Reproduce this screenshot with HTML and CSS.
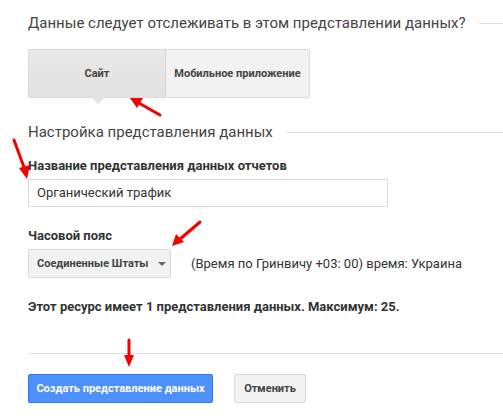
FILE: index.html
```html
<!DOCTYPE html>
<html lang="ru">
<head>
<meta charset="utf-8">
<link rel="stylesheet" href="styles.css">
</head>
<body>
<div class="page">
  <div class="legend legend-top"><span>Данные следует отслеживать в этом представлении данных?</span></div>
  <div class="toggle">
    <div class="tg tg-on">Сайт</div>
    <div class="tg">Мобильное приложение</div>
  </div>
  <div class="legend legend-setup"><span>Настройка представления данных</span></div>
  <div class="label label-name">Название представления данных отчетов</div>
  <div class="input">Органический трафик</div>
  <div class="label label-tz">Часовой пояс</div>
  <div class="tz-row">
    <div class="select">Соединенные Штаты <span class="caret"></span></div>
    <div class="tz-text">(Время по Гринвичу +03: 00) время: Украина</div>
  </div>
  <div class="note">Этот ресурс имеет 1 представления данных. Максимум: 25.</div>
  <div class="sep"></div>
  <div class="actions">
    <div class="btn btn-primary">Создать представление данных</div>
    <div class="btn">Отменить</div>
  </div>
</div>
<svg class="arrows" width="503" height="418" viewBox="0 0 503 418">
  <g stroke="#f40000" stroke-width="3" stroke-linecap="round" fill="none">
    <line x1="160" y1="115" x2="137" y2="102"/>
    <line x1="14" y1="140" x2="25" y2="170"/>
    <line x1="200" y1="222" x2="179" y2="240"/>
    <line x1="129" y1="340" x2="129" y2="358"/>
  </g>
  <g fill="#f40000">
    <polygon points="130,98 143,98 137,108"/>
    <polygon points="27,179 19,168 30,165"/>
    <polygon points="172,246 176,234 184,242"/>
    <polygon points="129,367 124,355 134,355"/>
  </g>
</svg>
</body>
</html>
```
FILE: styles.css
```css
html, body {
  margin: 0;
  padding: 0;
  background: #fff;
}
body {
  font-family: Roboto, "Liberation Sans", Arial, sans-serif;
  color: #333;
  width: 503px;
  height: 418px;
  overflow: hidden;
  position: relative;
}
.page {
  padding-left: 28px;
}
.legend {
  display: flex;
  align-items: center;
  font-size: 15px;
  color: #444;
  line-height: 20px;
  white-space: nowrap;
}
.legend::after {
  content: "";
  flex: 1;
  border-top: 1px solid #e0e0e0;
  margin-left: 13px;
}
.legend-top {
  padding-top: 13px;
}
.toggle {
  display: flex;
  width: 282px;
  height: 49px;
  margin-top: 16px;
  border: 1px solid #dadada;
  border-radius: 2px;
  box-sizing: border-box;
  position: relative;
}
.tg {
  display: flex;
  align-items: center;
  justify-content: center;
  font-size: 11px;
  font-weight: bold;
  color: #444;
  background: #f2f2f2;
  flex: 1;
}
.tg-on {
  flex: 0 0 137px;
  background: linear-gradient(#e9e9e9, #e2e2e2);
  border-right: 1px solid #d4d4d4;
  box-sizing: border-box;
  position: relative;
}
.tg-on::after {
  content: "";
  position: absolute;
  left: 62px;
  bottom: -7px;
  border-left: 7px solid transparent;
  border-right: 7px solid transparent;
  border-top: 7px solid #e2e2e2;
}
.legend-setup {
  margin-top: 24px;
}
.label {
  font-size: 13px;
  font-weight: bold;
  color: #333;
  line-height: 16px;
}
.label-name {
  margin-top: 16px;
}
.input {
  width: 360px;
  height: 28px;
  box-sizing: border-box;
  border: 1px solid #d9d9d9;
  margin-top: 5px;
  padding-left: 8px;
  font-size: 13px;
  line-height: 26px;
  color: #333;
}
.label-tz {
  margin-top: 21px;
}
.tz-row {
  display: flex;
  align-items: center;
  margin-top: 5px;
}
.select {
  width: 143px;
  height: 29px;
  box-sizing: border-box;
  border: 1px solid #d9d9d9;
  border-radius: 2px;
  background: #f2f2f2;
  font-size: 11px;
  font-weight: bold;
  color: #444;
  display: flex;
  align-items: center;
  padding-left: 8px;
}
.caret {
  margin-left: 10px;
  border-left: 4px solid transparent;
  border-right: 4px solid transparent;
  border-top: 4px solid #666;
}
.tz-text {
  margin-left: 20px;
  font-size: 13px;
  color: #333;
}
.note {
  margin-top: 21px;
  font-size: 13px;
  font-weight: bold;
  line-height: 16px;
  color: #333;
}
.sep {
  margin-top: 38px;
  border-top: 1px solid #e0e0e0;
}
.actions {
  display: flex;
  gap: 21px;
  margin-top: 20px;
}
.btn {
  height: 29px;
  box-sizing: border-box;
  border: 1px solid #d9d9d9;
  border-radius: 2px;
  background: #f2f2f2;
  font-size: 11px;
  font-weight: bold;
  color: #444;
  display: flex;
  align-items: center;
  justify-content: center;
  width: 72px;
}
.btn-primary {
  width: 185px;
  background: #4d90fe;
  border-color: #3079ed;
  color: #fff;
}
.arrows {
  position: absolute;
  left: 0;
  top: 0;
}
```
